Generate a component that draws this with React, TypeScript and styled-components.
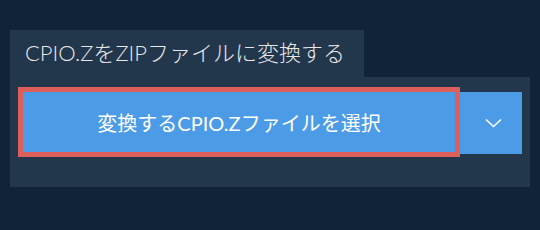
import React from "react";
import styled, { createGlobalStyle } from "styled-components";

const colors = {
  page: "#112339",
  panel: "#22364c",
  blue: "#4c9be6",
  red: "#dd5f5b",
  text: "#e6e8ea",
};

const GlobalStyle = createGlobalStyle`
  html, body {
    margin: 0;
    padding: 0;
    background: ${colors.page};
  }
  body {
    font-family: Lato, "Noto Sans CJK JP", sans-serif;
  }
`;

const Page = styled.div`
  width: 540px;
  height: 230px;
  padding: 30px 10px 0 10px;
  box-sizing: border-box;
`;

const Tab = styled.div`
  display: inline-flex;
  align-items: center;
  height: 47px;
  padding: 0 19px 5px 15px;
  box-sizing: border-box;
  background: ${colors.panel};
  color: ${colors.text};
  font-size: 22px;
  font-weight: 300;
`;

const Panel = styled.div`
  width: 520px;
  height: 110px;
  box-sizing: border-box;
  background: ${colors.panel};
  padding: 15px 8px 0 13px;
  display: flex;
  align-items: flex-start;
`;

const MainButton = styled.button`
  width: 432px;
  height: 60px;
  border: none;
  background: ${colors.blue};
  color: #fff;
  font-family: inherit;
  font-size: 20px;
  padding-top: 2px;
  outline: 5px solid ${colors.red};
  position: relative;
  z-index: 1;
  cursor: pointer;
`;

const DropButton = styled.button`
  width: 67px;
  height: 62px;
  border: none;
  background: ${colors.blue};
  display: flex;
  align-items: center;
  justify-content: center;
  padding: 0 0 0 10px;
  cursor: pointer;
`;

export default function App() {
  return (
    <Page>
      <GlobalStyle />
      <Tab>CPIO.ZをZIPファイルに変換する</Tab>
      <Panel>
        <MainButton>変換するCPIO.Zファイルを選択</MainButton>
        <DropButton>
          <svg width="17" height="10" viewBox="0 0 17 10" fill="none">
            <path d="M1 1.5 L8.5 8.5 L16 1.5" stroke="#fff" strokeWidth="1.6" />
          </svg>
        </DropButton>
      </Panel>
    </Page>
  );
}
